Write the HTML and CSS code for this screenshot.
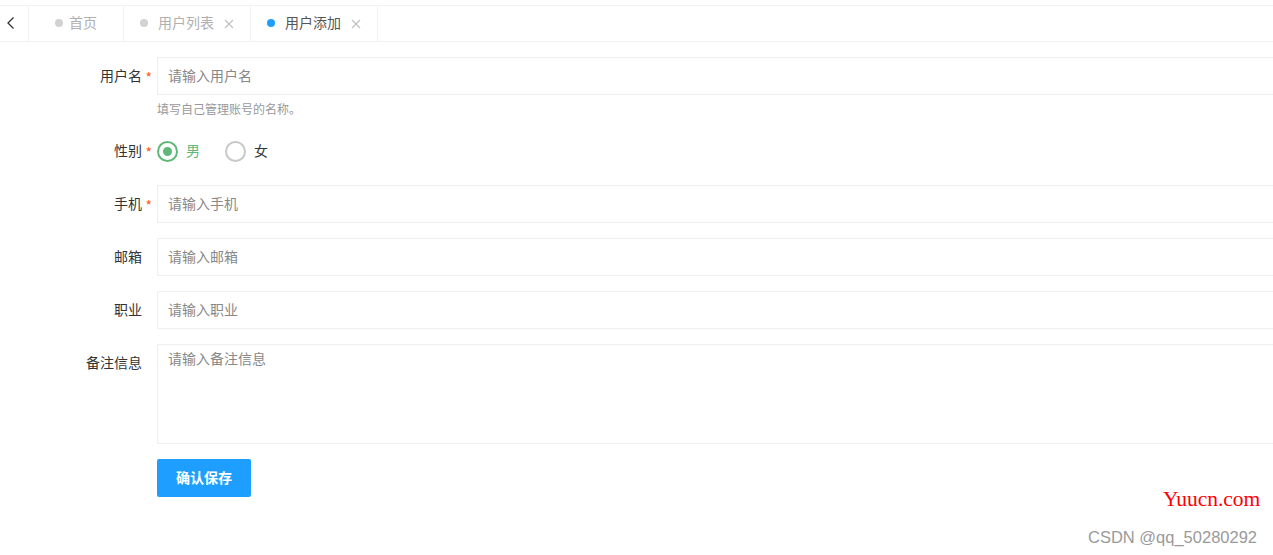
FILE: index.html
```html
<!DOCTYPE html>
<html lang="zh-CN">
<head>
<meta charset="utf-8">
<title>用户添加</title>
<link rel="stylesheet" href="styles.css">
</head>
<body>
<div class="tabs">
  <div class="tab-back">
    <svg width="10" height="14" viewBox="0 0 10 14"><path d="M7.5 1.5 L2 7 L7.5 12.5" fill="none" stroke="#333" stroke-width="1.3"/></svg>
  </div>
  <div class="tab tab-home"><span class="dot"></span><span class="tab-title">首页</span></div>
  <div class="tab"><span class="dot"></span><span class="tab-title">用户列表</span>
    <svg class="close" width="10" height="10" viewBox="0 0 10 10"><path d="M1 1 L9 9 M9 1 L1 9" stroke="#c2c2c2" stroke-width="1.2"/></svg>
  </div>
  <div class="tab active"><span class="dot"></span><span class="tab-title">用户添加</span>
    <svg class="close" width="10" height="10" viewBox="0 0 10 10"><path d="M1 1 L9 9 M9 1 L1 9" stroke="#c2c2c2" stroke-width="1.2"/></svg>
  </div>
</div>

<form class="form">
  <div class="item">
    <label class="label required">用户名</label>
    <div class="block">
      <input class="input" type="text" placeholder="请输入用户名">
      <div class="aux">填写自己管理账号的名称。</div>
    </div>
  </div>
  <div class="item">
    <label class="label required">性别</label>
    <div class="block radios">
      <span class="radio checked"><span class="radio-icon"></span>男</span>
      <span class="radio"><span class="radio-icon"></span>女</span>
    </div>
  </div>
  <div class="item">
    <label class="label required">手机</label>
    <div class="block"><input class="input" type="text" placeholder="请输入手机"></div>
  </div>
  <div class="item">
    <label class="label">邮箱</label>
    <div class="block"><input class="input" type="text" placeholder="请输入邮箱"></div>
  </div>
  <div class="item">
    <label class="label">职业</label>
    <div class="block"><input class="input" type="text" placeholder="请输入职业"></div>
  </div>
  <div class="item">
    <label class="label">备注信息</label>
    <div class="block"><textarea class="textarea" placeholder="请输入备注信息"></textarea></div>
  </div>
  <div class="item">
    <div class="label"></div>
    <div class="block"><button type="button" class="btn">确认保存</button></div>
  </div>
</form>

<div class="wm-yuucn">Yuucn.com</div>
<div class="wm-csdn">CSDN @qq_50280292</div>
</body>
</html>
```

FILE: styles.css
```css
* { box-sizing: border-box; }
html, body {
  margin: 0;
  padding: 0;
  background: #fff;
  font-family: "Microsoft YaHei", "Noto Sans CJK SC", "Liberation Sans", sans-serif;
  font-size: 14px;
  color: #333;
  overflow: hidden;
}
body { position: relative; width: 1273px; height: 555px; }

.tabs {
  margin-top: 5px;
  height: 37px;
  display: flex;
  border-top: 1px solid #f2f2f2;
  border-bottom: 1px solid #f2f2f2;
}
.tab-back {
  width: 29px;
  display: flex;
  align-items: center;
  justify-content: center;
  padding-right: 6px;
  padding-bottom: 2px;
  border-right: 1px solid #f2f2f2;
}
.tab {
  display: flex;
  align-items: center;
  padding: 0 16px 3px 16px;
  border-right: 1px solid #f2f2f2;
  color: #b0b0b0;
  line-height: 20px;
}
.tab-home { padding: 0 26px 3px 26px; }
.dot {
  width: 8px;
  height: 8px;
  border-radius: 50%;
  background: #d2d2d2;
  margin-right: 10px;
  margin-top: 2px;
}
.tab-home .dot { margin-right: 6px; }
.tab.active { color: #555; }
.tab.active .dot { background: #1e9fff; }
.close { margin-left: 10px; margin-top: 3px; }

.form { padding-top: 15px; }
.item {
  display: flex;
  margin-bottom: 15px;
}
.label {
  position: relative;
  width: 157px;
  flex: none;
  padding: 8px 15px 10px 0;
  line-height: 20px;
  text-align: right;
  color: #333;
}
.label.required::after {
  content: "*";
  position: absolute;
  right: 5px;
  top: 13px;
  color: #ff5722;
  line-height: 14px;
}
.block { flex: 1; }
.input {
  display: block;
  width: 100%;
  height: 38px;
  border: 1px solid #eee;
  border-right: none;
  border-radius: 2px 0 0 2px;
  padding: 0 10px 2px;
  font: inherit;
  color: #333;
  outline: none;
}
.input::placeholder, .textarea::placeholder { color: #888; }
.aux {
  margin-top: 5px;
  line-height: 17px;
  font-size: 12px;
  color: #999;
}
.radios {
  display: flex;
  align-items: center;
  height: 38px;
  padding-bottom: 2px;
}
.radio {
  display: flex;
  align-items: center;
  margin-right: 25px;
  color: #333;
}
.radio-icon {
  width: 21px;
  height: 21px;
  border: 2px solid #c8c8c8;
  border-radius: 50%;
  margin-right: 8px;
  margin-top: 2px;
  display: flex;
  align-items: center;
  justify-content: center;
}
.radio.checked { color: #5fb878; }
.radio.checked .radio-icon { border-color: #5fb878; }
.radio.checked .radio-icon::after {
  content: "";
  width: 9px;
  height: 9px;
  border-radius: 50%;
  background: #5fb878;
}
.textarea {
  display: block;
  width: 100%;
  height: 100px;
  border: 1px solid #eee;
  border-right: none;
  border-radius: 2px 0 0 2px;
  padding: 3px 10px;
  line-height: 20px;
  font: inherit;
  resize: none;
  outline: none;
}
.btn {
  height: 38px;
  padding: 0 19px 2px;
  background: #1e9fff;
  color: #fff;
  border: none;
  border-radius: 2px;
  font: inherit;
  font-weight: bold;
  font-size: 14px;
}

.wm-yuucn {
  position: absolute;
  left: 1163px;
  top: 486px;
  font-family: "Liberation Serif", serif;
  font-size: 21.5px;
  line-height: 26px;
  color: #f00;
}
.wm-csdn {
  position: absolute;
  left: 1088px;
  top: 527px;
  font-family: "Liberation Sans", Arial, sans-serif;
  font-size: 16.5px;
  line-height: 20px;
  color: #9a9a9a;
}
```
